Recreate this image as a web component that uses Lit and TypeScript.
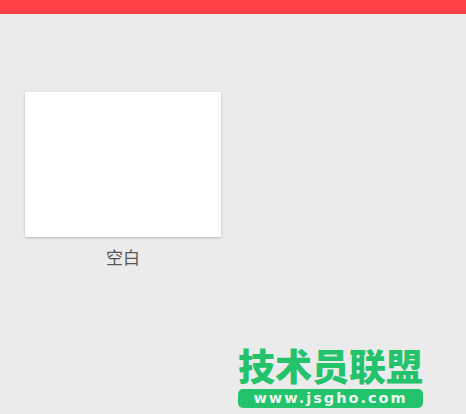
import { LitElement, html, css } from "lit";
import { customElement } from "lit/decorators.js";

@customElement("app-root")
export class AppRoot extends LitElement {
  static styles = css`
    :host {
      display: block;
      width: 466px;
      height: 414px;
      background: #ebebeb;
      overflow: hidden;
      position: relative;
      font-family: "Noto Sans CJK SC", "Liberation Sans", sans-serif;
    }
    .bar {
      height: 14px;
      background: #ff4046;
    }
    .content {
      padding: 78px 0 0 25px;
      width: 196px;
    }
    .card {
      width: 196px;
      height: 145px;
      background: #fff;
      box-shadow: 0 1px 2px rgba(0, 0, 0, 0.22);
    }
    .label {
      margin-top: 9px;
      text-align: center;
      font-size: 17px;
      line-height: 22px;
      color: #555;
    }
    .logo {
      position: absolute;
      left: 238px;
      top: 345px;
      width: 185px;
      display: flex;
      flex-direction: column;
      align-items: stretch;
    }
    .logo-title {
      font-family: "Noto Sans CJK SC", sans-serif;
      font-weight: 900;
      font-size: 37px;
      line-height: 40px;
      color: #23c36c;
      white-space: nowrap;
    }
    .logo-url {
      margin-top: 4px;
      height: 19px;
      border-radius: 5px;
      background: #23c36c;
      color: #eef7f0;
      font-family: "DejaVu Sans", sans-serif;
      font-weight: 700;
      font-size: 14.5px;
      line-height: 19px;
      letter-spacing: 2px;
      text-align: center;
      white-space: nowrap;
    }
  `;

  render() {
    return html`
      <div class="bar"></div>
      <div class="content">
        <div class="card"></div>
        <div class="label">空白</div>
      </div>
      <div class="logo">
        <div class="logo-title">技术员联盟</div>
        <div class="logo-url">www.jsgho.com</div>
      </div>
    `;
  }
}
